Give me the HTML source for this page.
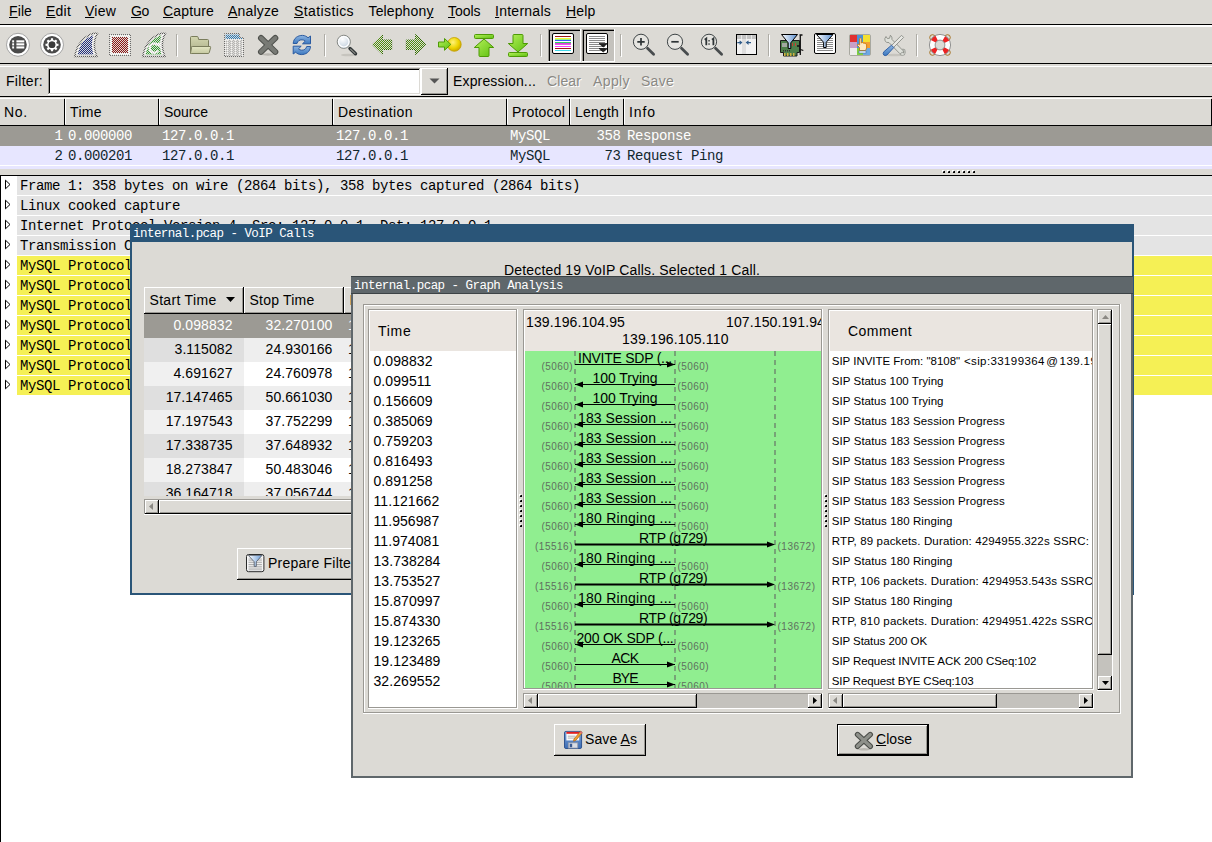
<!DOCTYPE html>
<html><head><meta charset="utf-8"><title>Wireshark</title>
<style>
html,body{margin:0;padding:0}
body{width:1212px;height:842px;overflow:hidden;background:#fff;position:relative;font-family:"Liberation Sans",sans-serif}
#root{position:absolute;left:0;top:0;width:1212px;height:842px;overflow:hidden;background:#fff}
#root div,#root span,#root svg{position:absolute}
.t{height:0;line-height:0;white-space:pre;font-family:"Liberation Sans",sans-serif}
.m{font-family:"Liberation Mono",monospace}
u{text-decoration:underline;text-underline-offset:1px}
.clip{overflow:hidden}
.dis{text-shadow:1px 1px 0 #fff}
</style></head>
<body><div id="root">
<div style="left:0px;top:0px;width:1212px;height:842px;background:#fff;"></div>
<div style="left:0px;top:0px;width:1212px;height:176px;background:#dcdad5;"></div>
<div style="left:0px;top:24px;width:1212px;height:1px;background:#000000;"></div>
<div style="left:0px;top:25px;width:1212px;height:2px;background:#ffffff;"></div>
<span class="t" style="left:9.00px;top:11px;font-size:14px;color:#000;letter-spacing:0.110px;"><u>F</u>ile</span>
<span class="t" style="left:46.00px;top:11px;font-size:14px;color:#000;letter-spacing:0.219px;"><u>E</u>dit</span>
<span class="t" style="left:85.00px;top:11px;font-size:14px;color:#000;letter-spacing:0.227px;"><u>V</u>iew</span>
<span class="t" style="left:131.00px;top:11px;font-size:14px;color:#000;letter-spacing:-0.338px;"><u>G</u>o</span>
<span class="t" style="left:163.00px;top:11px;font-size:14px;color:#000;letter-spacing:0.170px;"><u>C</u>apture</span>
<span class="t" style="left:228.00px;top:11px;font-size:14px;color:#000;letter-spacing:0.170px;"><u>A</u>nalyze</span>
<span class="t" style="left:294.00px;top:11px;font-size:14px;color:#000;letter-spacing:0.399px;"><u>S</u>tatistics</span>
<span class="t" style="left:368.50px;top:11px;font-size:14px;color:#000;letter-spacing:0.130px;">Telephon<u>y</u></span>
<span class="t" style="left:448.00px;top:11px;font-size:14px;color:#000;letter-spacing:-0.037px;"><u>T</u>ools</span>
<span class="t" style="left:495.00px;top:11px;font-size:14px;color:#000;letter-spacing:0.256px;"><u>I</u>nternals</span>
<span class="t" style="left:566.00px;top:11px;font-size:14px;color:#000;letter-spacing:0.176px;"><u>H</u>elp</span>
<div style="left:0px;top:63px;width:1212px;height:1px;background:#000000;"></div>
<div style="left:0px;top:66px;width:1212px;height:1px;background:#ffffff;"></div>
<svg style="left:0;top:26px" width="1212" height="37" viewBox="0 26 1212 37"><defs><pattern id="chk" width="2" height="2" patternUnits="userSpaceOnUse"><rect x="0" y="0" width="1" height="1" fill="#dcdad5"/><rect x="1" y="1" width="1" height="1" fill="#dcdad5"/></pattern><linearGradient id="gfold" x1="0" y1="0" x2="0" y2="1"><stop offset="0" stop-color="#d4d7b0"/><stop offset="1" stop-color="#a8ab86"/></linearGradient><linearGradient id="gflap" x1="0" y1="0" x2="0" y2="1"><stop offset="0" stop-color="#e4e7c4"/><stop offset="1" stop-color="#c6c9a2"/></linearGradient><linearGradient id="ggrn" x1="0" y1="0" x2="1" y2="1"><stop offset="0" stop-color="#b4f05a"/><stop offset="1" stop-color="#5fc010"/></linearGradient><linearGradient id="gblu" x1="0" y1="0" x2="0" y2="1"><stop offset="0" stop-color="#8db4e0"/><stop offset="1" stop-color="#3b78c0"/></linearGradient><radialGradient id="gball" cx="0.4" cy="0.35" r="0.7"><stop offset="0" stop-color="#fff27a"/><stop offset="0.6" stop-color="#edd400"/><stop offset="1" stop-color="#c4a000"/></radialGradient><radialGradient id="glens" cx="0.4" cy="0.3" r="0.8"><stop offset="0" stop-color="#ffffff"/><stop offset="1" stop-color="#b9c9d9"/></radialGradient><linearGradient id="gfun" x1="0" y1="0" x2="1" y2="0"><stop offset="0" stop-color="#ffffff"/><stop offset="1" stop-color="#5b8fd0"/></linearGradient></defs><rect x="176" y="34" width="1" height="22" fill="#aeaca6"/><rect x="177" y="35" width="1" height="22" fill="#fff"/><rect x="324" y="34" width="1" height="22" fill="#aeaca6"/><rect x="325" y="35" width="1" height="22" fill="#fff"/><rect x="540" y="34" width="1" height="22" fill="#aeaca6"/><rect x="541" y="35" width="1" height="22" fill="#fff"/><rect x="620" y="34" width="1" height="22" fill="#aeaca6"/><rect x="621" y="35" width="1" height="22" fill="#fff"/><rect x="768" y="34" width="1" height="22" fill="#aeaca6"/><rect x="769" y="35" width="1" height="22" fill="#fff"/><rect x="916" y="34" width="1" height="22" fill="#aeaca6"/><rect x="917" y="35" width="1" height="22" fill="#fff"/><circle cx="18" cy="44.8" r="11.5" fill="#fff" stroke="#9a9a9a" stroke-width="0.9"/><circle cx="18" cy="44.8" r="8.8" fill="#4a4a4a"/><rect x="16.4" y="40.3" width="7.9" height="2.1" fill="#fff"/><rect x="12.2" y="40.3" width="1.9" height="2.1" fill="#fff"/><rect x="16.4" y="43.3" width="7.9" height="2.1" fill="#fff"/><rect x="12.2" y="43.3" width="1.9" height="2.1" fill="#fff"/><rect x="16.4" y="46.4" width="7.9" height="2.1" fill="#fff"/><rect x="12.2" y="46.4" width="1.9" height="2.1" fill="#fff"/><circle cx="52" cy="44.8" r="11.5" fill="#fff" stroke="#9a9a9a" stroke-width="0.9"/><circle cx="52" cy="44.8" r="8.8" fill="#4a4a4a"/><path d="M56.86 43.63 L58.52 43.77 L58.52 45.83 L56.86 45.97 L56.26 47.41 L57.34 48.68 L55.88 50.14 L54.61 49.06 L53.17 49.66 L53.03 51.32 L50.97 51.32 L50.83 49.66 L49.39 49.06 L48.12 50.14 L46.66 48.68 L47.74 47.41 L47.14 45.97 L45.48 45.83 L45.48 43.77 L47.14 43.63 L47.74 42.19 L46.66 40.92 L48.12 39.46 L49.39 40.54 L50.83 39.94 L50.97 38.28 L53.03 38.28 L53.17 39.94 L54.61 40.54 L55.88 39.46 L57.34 40.92 L56.26 42.19Z M55.30 44.80 A3.3 3.3 0 1 0 48.70 44.80 A3.3 3.3 0 1 0 55.30 44.80Z" fill="#fff" fill-rule="evenodd"/><circle cx="52" cy="44.8" r="3.3" fill="#3a3a3a"/><g transform="translate(74 33)"><path d="M0.7 23.5 L23 23.5 C21.8 20.5 20.9 18 20.6 15 C20.2 11 20.5 5 23.5 0.4 C20 -0.2 17.5 0.8 15.8 1.6 C12 3.5 9.5 5.8 8.3 7.3 C5.5 10.5 4 13 3.3 14.5 C2 17.5 1.2 20.5 0.7 23.5Z" fill="#fff" stroke="#5a5a5a" stroke-width="1.5"/><path d="M3.7 21.6 L19.4 21.6 C18.6 18 18 15 17.95 13 C17.9 10 18.3 6 19.4 2.3 C15 3.6 11 6.5 9 9 C6.5 12 4.5 17 3.7 21.6Z" fill="#1c2c80"/></g><rect x="74" y="32" width="25" height="26" fill="url(#chk)" shape-rendering="crispEdges"/><rect x="109.5" y="34.5" width="21" height="21" fill="#fff" stroke="#6a6a6a" stroke-width="1"/><rect x="112" y="37" width="16" height="16" fill="#8e1414"/><rect x="108" y="34" width="24" height="24" fill="url(#chk)" shape-rendering="crispEdges"/><g transform="translate(142 33)"><path d="M0.7 23.5 L23 23.5 C21.8 20.5 20.9 18 20.6 15 C20.2 11 20.5 5 23.5 0.4 C20 -0.2 17.5 0.8 15.8 1.6 C12 3.5 9.5 5.8 8.3 7.3 C5.5 10.5 4 13 3.3 14.5 C2 17.5 1.2 20.5 0.7 23.5Z" fill="#fff" stroke="#5a5a5a" stroke-width="1.5"/><path d="M3.7 21.6 L19.4 21.6 C18.6 18 18 15 17.95 13 C17.9 10 18.3 6 19.4 2.3 C15 3.6 11 6.5 9 9 C6.5 12 4.5 17 3.7 21.6Z" fill="#2fa02f"/><path d="M15.8 12.2 A4.6 4.6 0 1 0 16.2 17.5" fill="none" stroke="#fff" stroke-width="2.4"/><path d="M13 11 L18.3 9.2 L17.6 14.6Z" fill="#fff"/></g><rect x="142" y="32" width="25" height="26" fill="url(#chk)" shape-rendering="crispEdges"/><path d="M190.5 53.5 V37.5 Q190.5 36.5 191.5 36.5 H197 Q198 36.5 198.2 37.5 L198.6 39.5 H207.5 Q208.5 39.5 208.5 40.5 V47 H190.5Z" fill="url(#gfold)" stroke="#7a7d5c" stroke-width="1"/><path d="M192.5 46.5 H210 Q210.8 46.5 210.6 47.4 L209.3 52.6 Q209 53.5 208 53.5 H191.3 Q190.4 53.5 190.6 52.6 L191.6 47.4 Q191.8 46.5 192.5 46.5Z" fill="url(#gflap)" stroke="#7a7d5c" stroke-width="1"/><path d="M224.5 33.5 H239.5 L243.5 37.5 V56.5 H224.5Z" fill="#f4f4f4" stroke="#6a6a6a" stroke-width="1"/><path d="M225.5 34.5 H239 L242.5 38 V39 H225.5Z" fill="#2a7ab8"/><path d="M239.5 33.5 V37.5 H243.5Z" fill="#ddd" stroke="#6a6a6a" stroke-width="0.8"/><rect x="226" y="41" width="16" height="1" fill="#b4b4b4"/><rect x="226" y="43" width="16" height="1" fill="#b4b4b4"/><rect x="226" y="45" width="16" height="1" fill="#b4b4b4"/><rect x="226" y="47" width="16" height="1" fill="#b4b4b4"/><rect x="226" y="49" width="16" height="1" fill="#b4b4b4"/><rect x="226" y="51" width="16" height="1" fill="#b4b4b4"/><rect x="226" y="53" width="16" height="1" fill="#b4b4b4"/><rect x="226" y="55" width="16" height="1" fill="#b4b4b4"/><rect x="229" y="40" width="1" height="16" fill="#b4b4b4"/><rect x="233" y="40" width="1" height="16" fill="#b4b4b4"/><rect x="237" y="40" width="1" height="16" fill="#b4b4b4"/><rect x="241" y="40" width="1" height="16" fill="#b4b4b4"/><rect x="224" y="33" width="21" height="24" fill="url(#chk)" shape-rendering="crispEdges"/><ellipse cx="268" cy="54.5" rx="6" ry="1.2" fill="#b8b6b0"/><path d="M261 38 L275.3 51.8 M275.3 38 L261 51.8" stroke="#4e504c" stroke-width="6" stroke-linecap="round" fill="none"/><path d="M261 38 L275.3 51.8 M275.3 38 L261 51.8" stroke="#787a75" stroke-width="4" stroke-linecap="round" fill="none"/><g stroke="#2a5aa0" stroke-width="1" fill="url(#gblu)" stroke-linejoin="round"><path d="M293.2 43.5 C293.5 38 298 35.3 302.5 35.4 C305 35.5 306.8 36.6 308 37.8 L310.5 36 V43.8 H302.5 L305.2 41.2 C304.4 40.3 303.4 39.8 302 39.8 C299.5 39.8 297.6 41 297 43.5Z"/><path d="M310.5 46.5 C310.2 52 305.7 54.7 301.2 54.6 C298.7 54.5 296.9 53.4 295.7 52.2 L293.2 54 V46.2 H301.2 L298.5 48.8 C299.3 49.7 300.3 50.2 301.7 50.2 C304.2 50.2 306.1 49 306.7 46.5Z"/></g><ellipse cx="348" cy="55" rx="7" ry="1.3" fill="#c6c4be"/><path d="M350 48.5 L355.5 53.8" stroke="#2e3436" stroke-width="3.4" stroke-linecap="round"/><path d="M350.6 49.2 L355 53.4" stroke="#888a85" stroke-width="1.2" stroke-linecap="round"/><circle cx="343.8" cy="41.8" r="6.6" fill="url(#glens)" stroke="#888a85" stroke-width="1"/><circle cx="343.8" cy="41.8" r="5.2" fill="none" stroke="#fff" stroke-width="1.2"/><path d="M372.3 44.6 L382.5 34.6 V40 H391.7 V49.5 H382.5 V54.6Z" fill="#4f9010" stroke="#2f6a00" stroke-width="1"/><rect x="371" y="34" width="22" height="22" fill="url(#chk)" shape-rendering="crispEdges"/><path d="M425.7 44.6 L415.5 34.6 V40 H406.3 V49.5 H415.5 V54.6Z" fill="#4f9010" stroke="#2f6a00" stroke-width="1"/><rect x="405" y="34" width="22" height="22" fill="url(#chk)" shape-rendering="crispEdges"/><circle cx="454.3" cy="44.4" r="6.9" fill="url(#gball)" stroke="#c4a000" stroke-width="0.8"/><path d="M438.5 42 H444.5 V38.5 L450.8 44.4 L444.5 50.3 V47 H438.5Z" fill="url(#ggrn)" stroke="#4e9a06" stroke-width="1" stroke-linejoin="round"/><g fill="url(#ggrn)" stroke="#4e9a06" stroke-width="1" stroke-linejoin="round"><rect x="474.5" y="34.5" width="19" height="4" rx="1"/><path d="M484 39 L493.7 47.5 H489 V55.5 Q489 56.5 488 56.5 H480 Q479 56.5 479 55.5 V47.5 H474.3Z"/><rect x="508.5" y="52.5" width="19" height="4" rx="1"/><path d="M518 52 L527.7 43.5 H523 V35.5 Q523 34.5 522 34.5 H514 Q513 34.5 513 35.5 V43.5 H508.3Z"/></g><rect x="548" y="29" width="33" height="33" fill="#c4c2bd"/><rect x="548" y="29" width="33" height="1" fill="#9a9893"/><rect x="548" y="29" width="1" height="33" fill="#9a9893"/><rect x="549" y="30" width="32" height="1" fill="#000"/><rect x="549" y="30" width="1" height="31" fill="#000"/><rect x="548" y="61" width="33" height="1" fill="#fff"/><rect x="580" y="29" width="1" height="33" fill="#fff"/><rect x="582" y="29" width="33" height="33" fill="#c4c2bd"/><rect x="582" y="29" width="33" height="1" fill="#9a9893"/><rect x="582" y="29" width="1" height="33" fill="#9a9893"/><rect x="583" y="30" width="32" height="1" fill="#000"/><rect x="583" y="30" width="1" height="31" fill="#000"/><rect x="582" y="61" width="33" height="1" fill="#fff"/><rect x="614" y="29" width="1" height="33" fill="#fff"/><rect x="552.5" y="33.5" width="21" height="20" rx="1.5" fill="#fff" stroke="#000" stroke-width="1"/><rect x="555" y="36" width="16" height="1" fill="#a01818"/><rect x="555" y="38" width="16" height="1" fill="#f4f430"/><rect x="555" y="39" width="16" height="1" fill="#90f090"/><rect x="555" y="40" width="16" height="1" fill="#3c5cf0"/><rect x="555" y="42" width="16" height="1" fill="#30d060"/><rect x="555" y="43" width="16" height="1" fill="#e040e0"/><rect x="555" y="44" width="16" height="1" fill="#e060e0"/><rect x="555" y="46" width="16" height="1" fill="#ff40ff"/><rect x="555" y="48" width="16" height="1" fill="#a01818"/><rect x="555" y="50" width="16" height="1" fill="#40d8e8"/><rect x="586.5" y="33.5" width="21" height="20" rx="1.5" fill="#fff" stroke="#000" stroke-width="1"/><rect x="589" y="36" width="16" height="1" fill="#8a8a8a"/><rect x="589" y="38" width="16" height="1" fill="#8a8a8a"/><rect x="589" y="40" width="16" height="1" fill="#8a8a8a"/><rect x="589" y="42" width="16" height="1" fill="#8a8a8a"/><rect x="589" y="44" width="16" height="1" fill="#8a8a8a"/><rect x="589" y="46" width="16" height="1" fill="#8a8a8a"/><rect x="589" y="48" width="16" height="1" fill="#8a8a8a"/><rect x="589" y="50" width="16" height="1" fill="#8a8a8a"/><path d="M599 43.5 H607.5 L603.2 47Z M599 48.5 H607.5 L603.2 52Z" fill="#222" stroke="#000" stroke-width="0.6"/><path d="M647.5 48.3 L653.6 54.2" stroke="#484c4e" stroke-width="2.8" stroke-linecap="round"/><circle cx="641" cy="41.8" r="7.6" fill="#e6e5e1" stroke="#3e4446" stroke-width="1"/><path d="M637.3 41.8 H644.7 M641 38.1 V45.5" stroke="#2e3436" stroke-width="1.7"/><path d="M681.5 48.3 L687.6 54.2" stroke="#484c4e" stroke-width="2.8" stroke-linecap="round"/><circle cx="675" cy="41.8" r="7.6" fill="#e6e5e1" stroke="#3e4446" stroke-width="1"/><path d="M671.3 41.8 H678.7" stroke="#2e3436" stroke-width="1.7"/><path d="M715.5 48.3 L721.6 54.2" stroke="#484c4e" stroke-width="2.8" stroke-linecap="round"/><circle cx="709" cy="41.8" r="7.6" fill="#e6e5e1" stroke="#3e4446" stroke-width="1"/><path d="M704.7 39.8 L706.3 38.6 V45.3 M712 39.8 L713.4 38.6 V45.3" stroke="#2e3436" stroke-width="1.8" fill="none"/><rect x="708.4" y="40" width="1.3" height="1.5" fill="#2e3436"/><rect x="708.4" y="43.3" width="1.3" height="1.5" fill="#2e3436"/><rect x="736.5" y="34.5" width="20" height="20" fill="#f2f2f2" stroke="#000" stroke-width="1"/><rect x="737" y="35" width="19" height="4" fill="#c4c4c4"/><rect x="742" y="39" width="4" height="15" fill="#dedede"/><rect x="741" y="35" width="1" height="4" fill="#e8e8e8"/><rect x="746" y="35" width="1" height="4" fill="#e8e8e8"/><rect x="751" y="35" width="1" height="4" fill="#e8e8e8"/><path d="M737.3 42.6 H741.3 M739.6 40.8 L741.6 42.6 L739.6 44.4 M751 42.6 H746.8 M748.6 40.8 L746.5 42.6 L748.6 44.4" stroke="#2f5a88" stroke-width="1.1" fill="none"/><path d="M780.5 40.5 H799.5 V52.5 H797 V56 H783.5 V52.5 H780.5Z" fill="#4d7f4a" stroke="#1c1c1c" stroke-width="1"/><rect x="782" y="43" width="5" height="4" fill="#a0a8a0"/><rect x="792" y="43" width="1" height="3" fill="#c84030"/><rect x="795" y="43" width="1" height="3" fill="#c84030"/><rect x="784" y="53" width="1.5" height="3" fill="#d0b040"/><rect x="787" y="53" width="1.5" height="3" fill="#d0b040"/><rect x="790" y="53" width="1.5" height="3" fill="#d0b040"/><rect x="793" y="53" width="1.5" height="3" fill="#d0b040"/><rect x="783" y="50" width="1" height="1.5" fill="#303030"/><rect x="785" y="50" width="1" height="1.5" fill="#303030"/><rect x="787" y="50" width="1" height="1.5" fill="#303030"/><rect x="789" y="50" width="1" height="1.5" fill="#303030"/><path d="M800.3 34.5 V55 M799.5 35 H802.5 M800.5 49.5 L803.3 50.5 M797 46 H800" stroke="#111" stroke-width="1.3" fill="none"/><path d="M781.5 34.5 H797.5 L790.8 42.8 V48.5 H788.2 V42.8Z" fill="url(#gfun)" stroke="#000" stroke-width="1" stroke-linejoin="round"/><rect x="814.5" y="33.5" width="21" height="20" rx="1.5" fill="#fff" stroke="#000" stroke-width="1"/><rect x="817" y="38" width="16" height="1" fill="#8a8a8a"/><rect x="817" y="40" width="16" height="1" fill="#8a8a8a"/><rect x="817" y="42" width="16" height="1" fill="#8a8a8a"/><rect x="817" y="44" width="16" height="1" fill="#8a8a8a"/><rect x="817" y="46" width="16" height="1" fill="#8a8a8a"/><rect x="817" y="48" width="16" height="1" fill="#8a8a8a"/><rect x="817" y="50" width="16" height="1" fill="#8a8a8a"/><path d="M816.5 34.5 H833 L826.2 42.3 V47.5 H823.6 V42.3Z" fill="url(#gfun)" stroke="#000" stroke-width="1" stroke-linejoin="round"/><rect x="849.5" y="34.5" width="21" height="21" rx="1.5" fill="#eeeeec" stroke="#a8a8a0" stroke-width="1"/><rect x="850" y="35" width="7" height="7" fill="#e03030"/><rect x="857" y="35" width="6" height="7" fill="#4a90d8"/><rect x="863" y="35" width="7" height="7" fill="#f4e030"/><rect x="850" y="42" width="7" height="6" fill="#c8a0c8"/><rect x="863" y="42" width="7" height="6" fill="#f4a030"/><rect x="850" y="48" width="7" height="7" fill="#eeeeec"/><rect x="857" y="48" width="6" height="7" fill="#80d040"/><rect x="863" y="48" width="7" height="7" fill="#70a8e0"/><rect x="857" y="42" width="6" height="6" fill="#4a90d8"/><path d="M859.5 50.5 V47.5 L857.6 45.6 Q857 44.4 858.3 44.3 L859.6 45 V38.6 Q860.4 37.4 861.3 38.6 V43 L862 42.4 Q862.8 42.2 863.2 43.2 L864 42.9 Q864.8 42.9 865 43.8 L865.8 43.6 Q866.7 43.8 866.6 44.8 V48 L865.6 50.5Z" fill="#fde8c0" stroke="#c87a10" stroke-width="0.9" stroke-linejoin="round"/><rect x="859" y="51" width="7" height="2" fill="#fff" stroke="#3a70b0" stroke-width="0.6"/><ellipse cx="894" cy="55" rx="9" ry="1.3" fill="#c6c4be"/><path d="M886 36.5 Q884.2 38.5 885 40.8 Q886.3 43 889 42.6 L899.8 53.6 Q901.5 55 903 53.5 Q904.3 52 902.8 50.4 L892 39.5 Q892.5 37 890.4 35.2 L889.6 38.2 L887.4 38.6Z" fill="#dfe1db" stroke="#8a8c86" stroke-width="0.9" stroke-linejoin="round"/><path d="M902.5 49 Q904.6 50.6 904 53 L901.6 52.4 L900.2 54.6 Q902 56 904.4 55 Q906 52.5 904.8 49.6Z" fill="#dfe1db" stroke="#8a8c86" stroke-width="0.7"/><path d="M901.5 35.3 L903.6 37.4 L893.5 47.5 L891.5 45.5Z" fill="#e8e8e4" stroke="#8a8c86" stroke-width="0.9" stroke-linejoin="round"/><path d="M891.5 45.2 L893.8 47.5 L887 55 Q885 56.3 883.7 55 Q882.5 53.6 883.8 51.8Z" fill="url(#gblu)" stroke="#2a5aa0" stroke-width="0.9" stroke-linejoin="round"/><circle cx="932.5" cy="37.5" r="2.8" fill="none" stroke="#a06a14" stroke-width="0.9"/><circle cx="947.5" cy="37.5" r="2.8" fill="none" stroke="#a06a14" stroke-width="0.9"/><circle cx="932.5" cy="52.5" r="2.8" fill="none" stroke="#a06a14" stroke-width="0.9"/><circle cx="947.5" cy="52.5" r="2.8" fill="none" stroke="#a06a14" stroke-width="0.9"/><circle cx="940" cy="45" r="7.7" fill="none" stroke="#fdfdfd" stroke-width="5.6"/><circle cx="940" cy="45" r="7.7" fill="none" stroke="#ee2222" stroke-width="5.6" stroke-dasharray="4.6 7.495" stroke-dashoffset="-3.75"/><circle cx="940" cy="45" r="10.6" fill="none" stroke="#888" stroke-width="0.9"/><circle cx="940" cy="45" r="4.9" fill="none" stroke="#888" stroke-width="0.9"/></svg>
<div style="left:0px;top:96px;width:1212px;height:1px;background:#000000;"></div>
<span class="t" style="left:6.00px;top:81px;font-size:14px;color:#000;letter-spacing:0.286px;">Filter:</span>
<div style="left:48px;top:68px;width:373px;height:27px;background:#fff;"></div>
<div style="left:48px;top:68px;width:373px;height:1px;background:#9a9893;"></div>
<div style="left:48px;top:68px;width:1px;height:27px;background:#9a9893;"></div>
<div style="left:49px;top:69px;width:371px;height:1px;background:#000000;"></div>
<div style="left:49px;top:69px;width:1px;height:25px;background:#000000;"></div>
<div style="left:48px;top:94px;width:373px;height:1px;background:#ffffff;"></div>
<div style="left:420px;top:68px;width:1px;height:27px;background:#ffffff;"></div>
<div style="left:49px;top:93px;width:371px;height:1px;background:#dcdad5;"></div>
<div style="left:419px;top:69px;width:1px;height:25px;background:#dcdad5;"></div>
<div style="left:421px;top:68px;width:27px;height:27px;background:#dcdad5;"></div>
<div style="left:421px;top:68px;width:26px;height:1px;background:#ffffff;"></div>
<div style="left:421px;top:68px;width:1px;height:26px;background:#ffffff;"></div>
<div style="left:421px;top:94px;width:27px;height:1px;background:#000000;"></div>
<div style="left:447px;top:68px;width:1px;height:27px;background:#000000;"></div>
<div style="left:422px;top:93px;width:25px;height:1px;background:#9a9893;"></div>
<div style="left:446px;top:69px;width:1px;height:25px;background:#9a9893;"></div>
<svg style="left:429px;top:78px" width="11" height="6" viewBox="0 0 11 6"><path d="M0.5 0.5h10L5.5 5.5z" fill="#555"/></svg>
<span class="t" style="left:453.00px;top:81px;font-size:14px;color:#000;letter-spacing:0.160px;">Expression...</span>
<span class="t dis" style="left:547.00px;top:81px;font-size:14px;color:#8a8883;letter-spacing:0.109px;">Clear</span>
<span class="t dis" style="left:593.00px;top:81px;font-size:14px;color:#8a8883;letter-spacing:0.396px;">Apply</span>
<span class="t dis" style="left:641.00px;top:81px;font-size:14px;color:#8a8883;letter-spacing:0.272px;">Save</span>
<div style="left:0px;top:98px;width:65px;height:27px;background:#dcdad5;"></div>
<div style="left:0px;top:98px;width:64px;height:1px;background:#ffffff;"></div>
<div style="left:64px;top:99px;width:1px;height:26px;background:#000000;"></div>
<span class="t" style="left:4.00px;top:112px;font-size:14px;color:#000;letter-spacing:0.738px;">No.</span>
<div style="left:65px;top:98px;width:94px;height:27px;background:#dcdad5;"></div>
<div style="left:65px;top:98px;width:93px;height:1px;background:#ffffff;"></div>
<div style="left:65px;top:98px;width:1px;height:26px;background:#ffffff;"></div>
<div style="left:158px;top:99px;width:1px;height:26px;background:#000000;"></div>
<span class="t" style="left:70.00px;top:112px;font-size:14px;color:#000;letter-spacing:0.352px;">Time</span>
<div style="left:159px;top:98px;width:174px;height:27px;background:#dcdad5;"></div>
<div style="left:159px;top:98px;width:173px;height:1px;background:#ffffff;"></div>
<div style="left:159px;top:98px;width:1px;height:26px;background:#ffffff;"></div>
<div style="left:332px;top:99px;width:1px;height:26px;background:#000000;"></div>
<span class="t" style="left:164.00px;top:112px;font-size:14px;color:#000;letter-spacing:-0.060px;">Source</span>
<div style="left:333px;top:98px;width:174px;height:27px;background:#dcdad5;"></div>
<div style="left:333px;top:98px;width:173px;height:1px;background:#ffffff;"></div>
<div style="left:333px;top:98px;width:1px;height:26px;background:#ffffff;"></div>
<div style="left:506px;top:99px;width:1px;height:26px;background:#000000;"></div>
<span class="t" style="left:338.00px;top:112px;font-size:14px;color:#000;letter-spacing:0.451px;">Destination</span>
<div style="left:507px;top:98px;width:63px;height:27px;background:#dcdad5;"></div>
<div style="left:507px;top:98px;width:62px;height:1px;background:#ffffff;"></div>
<div style="left:507px;top:98px;width:1px;height:26px;background:#ffffff;"></div>
<div style="left:569px;top:99px;width:1px;height:26px;background:#000000;"></div>
<span class="t" style="left:512.00px;top:112px;font-size:14px;color:#000;letter-spacing:0.205px;">Protocol</span>
<div style="left:570px;top:98px;width:54px;height:27px;background:#dcdad5;"></div>
<div style="left:570px;top:98px;width:53px;height:1px;background:#ffffff;"></div>
<div style="left:570px;top:98px;width:1px;height:26px;background:#ffffff;"></div>
<div style="left:623px;top:99px;width:1px;height:26px;background:#000000;"></div>
<span class="t" style="left:575.00px;top:112px;font-size:14px;color:#000;letter-spacing:0.196px;">Length</span>
<div style="left:624px;top:98px;width:588px;height:27px;background:#dcdad5;"></div>
<div style="left:624px;top:98px;width:587px;height:1px;background:#ffffff;"></div>
<div style="left:624px;top:98px;width:1px;height:26px;background:#ffffff;"></div>
<div style="left:1211px;top:99px;width:1px;height:26px;background:#000000;"></div>
<span class="t" style="left:629.00px;top:112px;font-size:14px;color:#000;letter-spacing:0.912px;">Info</span>
<div style="left:0px;top:125px;width:1212px;height:1px;background:#000000;"></div>
<div style="left:0px;top:126px;width:1212px;height:20px;background:#9c9a94;"></div>
<div style="left:0px;top:146px;width:1212px;height:19px;background:#e7e6ff;"></div>
<div style="left:0px;top:165px;width:1212px;height:1px;background:#fff;"></div>
<div style="left:0px;top:166px;width:1212px;height:3px;background:#e7e6ff;"></div>
<span class="t m" style="left:54.40px;top:136px;font-size:14px;color:#fff;letter-spacing:-0.401px;">1</span>
<span class="t m" style="left:68.00px;top:136px;font-size:14px;color:#fff;letter-spacing:-0.401px;">0.000000</span>
<span class="t m" style="left:162.00px;top:136px;font-size:14px;color:#fff;letter-spacing:-0.401px;">127.0.0.1</span>
<span class="t m" style="left:336.00px;top:136px;font-size:14px;color:#fff;letter-spacing:-0.401px;">127.0.0.1</span>
<span class="t m" style="left:510.00px;top:136px;font-size:14px;color:#fff;letter-spacing:-0.401px;">MySQL</span>
<span class="t m" style="left:596.60px;top:136px;font-size:14px;color:#fff;letter-spacing:-0.401px;">358</span>
<span class="t m" style="left:627.00px;top:136px;font-size:14px;color:#fff;letter-spacing:-0.401px;">Response</span>
<span class="t m" style="left:54.40px;top:156px;font-size:14px;color:#12272e;letter-spacing:-0.401px;">2</span>
<span class="t m" style="left:68.00px;top:156px;font-size:14px;color:#12272e;letter-spacing:-0.401px;">0.000201</span>
<span class="t m" style="left:162.00px;top:156px;font-size:14px;color:#12272e;letter-spacing:-0.401px;">127.0.0.1</span>
<span class="t m" style="left:336.00px;top:156px;font-size:14px;color:#12272e;letter-spacing:-0.401px;">127.0.0.1</span>
<span class="t m" style="left:510.00px;top:156px;font-size:14px;color:#12272e;letter-spacing:-0.401px;">MySQL</span>
<span class="t m" style="left:604.60px;top:156px;font-size:14px;color:#12272e;letter-spacing:-0.401px;">73</span>
<span class="t m" style="left:627.00px;top:156px;font-size:14px;color:#12272e;letter-spacing:-0.401px;">Request Ping</span>
<div style="left:942px;top:170px;width:2px;height:1px;background:#fff;"></div>
<div style="left:942px;top:171px;width:1px;height:1px;background:#fff;"></div>
<div style="left:943px;top:171px;width:1px;height:1px;background:#555;"></div>
<div style="left:944px;top:171px;width:1px;height:1px;background:#000;"></div>
<div style="left:943px;top:172px;width:2px;height:1px;background:#000;"></div>
<div style="left:947px;top:170px;width:2px;height:1px;background:#fff;"></div>
<div style="left:947px;top:171px;width:1px;height:1px;background:#fff;"></div>
<div style="left:948px;top:171px;width:1px;height:1px;background:#555;"></div>
<div style="left:949px;top:171px;width:1px;height:1px;background:#000;"></div>
<div style="left:948px;top:172px;width:2px;height:1px;background:#000;"></div>
<div style="left:952px;top:170px;width:2px;height:1px;background:#fff;"></div>
<div style="left:952px;top:171px;width:1px;height:1px;background:#fff;"></div>
<div style="left:953px;top:171px;width:1px;height:1px;background:#555;"></div>
<div style="left:954px;top:171px;width:1px;height:1px;background:#000;"></div>
<div style="left:953px;top:172px;width:2px;height:1px;background:#000;"></div>
<div style="left:957px;top:170px;width:2px;height:1px;background:#fff;"></div>
<div style="left:957px;top:171px;width:1px;height:1px;background:#fff;"></div>
<div style="left:958px;top:171px;width:1px;height:1px;background:#555;"></div>
<div style="left:959px;top:171px;width:1px;height:1px;background:#000;"></div>
<div style="left:958px;top:172px;width:2px;height:1px;background:#000;"></div>
<div style="left:962px;top:170px;width:2px;height:1px;background:#fff;"></div>
<div style="left:962px;top:171px;width:1px;height:1px;background:#fff;"></div>
<div style="left:963px;top:171px;width:1px;height:1px;background:#555;"></div>
<div style="left:964px;top:171px;width:1px;height:1px;background:#000;"></div>
<div style="left:963px;top:172px;width:2px;height:1px;background:#000;"></div>
<div style="left:967px;top:170px;width:2px;height:1px;background:#fff;"></div>
<div style="left:967px;top:171px;width:1px;height:1px;background:#fff;"></div>
<div style="left:968px;top:171px;width:1px;height:1px;background:#555;"></div>
<div style="left:969px;top:171px;width:1px;height:1px;background:#000;"></div>
<div style="left:968px;top:172px;width:2px;height:1px;background:#000;"></div>
<div style="left:972px;top:170px;width:2px;height:1px;background:#fff;"></div>
<div style="left:972px;top:171px;width:1px;height:1px;background:#fff;"></div>
<div style="left:973px;top:171px;width:1px;height:1px;background:#555;"></div>
<div style="left:974px;top:171px;width:1px;height:1px;background:#000;"></div>
<div style="left:973px;top:172px;width:2px;height:1px;background:#000;"></div>
<div style="left:0px;top:175px;width:1212px;height:1px;background:#000000;"></div>
<div style="left:0px;top:176px;width:1px;height:666px;background:#000000;"></div>
<div style="left:17px;top:176px;width:1195px;height:19px;background:#e4e4e4;"></div>
<svg style="left:4px;top:179px" width="8" height="11" viewBox="0 0 8 11"><path d="M1.5 1.2L6 5.5L1.5 9.8z" fill="#fff" stroke="#000" stroke-width="1"/></svg>
<span class="t m" style="left:20.00px;top:186px;font-size:14px;color:#000;letter-spacing:-0.401px;">Frame 1: 358 bytes on wire (2864 bits), 358 bytes captured (2864 bits)</span>
<div style="left:17px;top:196px;width:1195px;height:19px;background:#e4e4e4;"></div>
<svg style="left:4px;top:199px" width="8" height="11" viewBox="0 0 8 11"><path d="M1.5 1.2L6 5.5L1.5 9.8z" fill="#fff" stroke="#000" stroke-width="1"/></svg>
<span class="t m" style="left:20.00px;top:206px;font-size:14px;color:#000;letter-spacing:-0.401px;">Linux cooked capture</span>
<div style="left:17px;top:216px;width:1195px;height:19px;background:#e4e4e4;"></div>
<svg style="left:4px;top:219px" width="8" height="11" viewBox="0 0 8 11"><path d="M1.5 1.2L6 5.5L1.5 9.8z" fill="#fff" stroke="#000" stroke-width="1"/></svg>
<span class="t m" style="left:20.00px;top:226px;font-size:14px;color:#000;letter-spacing:-0.401px;">Internet Protocol Version 4, Src: 127.0.0.1, Dst: 127.0.0.1</span>
<div style="left:17px;top:236px;width:1195px;height:19px;background:#e4e4e4;"></div>
<svg style="left:4px;top:239px" width="8" height="11" viewBox="0 0 8 11"><path d="M1.5 1.2L6 5.5L1.5 9.8z" fill="#fff" stroke="#000" stroke-width="1"/></svg>
<span class="t m" style="left:20.00px;top:246px;font-size:14px;color:#000;letter-spacing:-0.401px;">Transmission Control Protocol, Src Port: mysql (3306)</span>
<div style="left:17px;top:256px;width:120px;height:19px;background:#f5f055;"></div>
<div style="left:1134px;top:256px;width:78px;height:19px;background:#f5f055;"></div>
<svg style="left:4px;top:259px" width="8" height="11" viewBox="0 0 8 11"><path d="M1.5 1.2L6 5.5L1.5 9.8z" fill="#fff" stroke="#000" stroke-width="1"/></svg>
<span class="t m" style="left:20.00px;top:266px;font-size:14px;color:#000;letter-spacing:-0.401px;">MySQL Protocol</span>
<div style="left:17px;top:276px;width:120px;height:19px;background:#f5f055;"></div>
<div style="left:1134px;top:276px;width:78px;height:19px;background:#f5f055;"></div>
<svg style="left:4px;top:279px" width="8" height="11" viewBox="0 0 8 11"><path d="M1.5 1.2L6 5.5L1.5 9.8z" fill="#fff" stroke="#000" stroke-width="1"/></svg>
<span class="t m" style="left:20.00px;top:286px;font-size:14px;color:#000;letter-spacing:-0.401px;">MySQL Protocol</span>
<div style="left:17px;top:296px;width:120px;height:19px;background:#f5f055;"></div>
<div style="left:1134px;top:296px;width:78px;height:19px;background:#f5f055;"></div>
<svg style="left:4px;top:299px" width="8" height="11" viewBox="0 0 8 11"><path d="M1.5 1.2L6 5.5L1.5 9.8z" fill="#fff" stroke="#000" stroke-width="1"/></svg>
<span class="t m" style="left:20.00px;top:306px;font-size:14px;color:#000;letter-spacing:-0.401px;">MySQL Protocol</span>
<div style="left:17px;top:316px;width:120px;height:19px;background:#f5f055;"></div>
<div style="left:1134px;top:316px;width:78px;height:19px;background:#f5f055;"></div>
<svg style="left:4px;top:319px" width="8" height="11" viewBox="0 0 8 11"><path d="M1.5 1.2L6 5.5L1.5 9.8z" fill="#fff" stroke="#000" stroke-width="1"/></svg>
<span class="t m" style="left:20.00px;top:326px;font-size:14px;color:#000;letter-spacing:-0.401px;">MySQL Protocol</span>
<div style="left:17px;top:336px;width:120px;height:19px;background:#f5f055;"></div>
<div style="left:1134px;top:336px;width:78px;height:19px;background:#f5f055;"></div>
<svg style="left:4px;top:339px" width="8" height="11" viewBox="0 0 8 11"><path d="M1.5 1.2L6 5.5L1.5 9.8z" fill="#fff" stroke="#000" stroke-width="1"/></svg>
<span class="t m" style="left:20.00px;top:346px;font-size:14px;color:#000;letter-spacing:-0.401px;">MySQL Protocol</span>
<div style="left:17px;top:356px;width:120px;height:19px;background:#f5f055;"></div>
<div style="left:1134px;top:356px;width:78px;height:19px;background:#f5f055;"></div>
<svg style="left:4px;top:359px" width="8" height="11" viewBox="0 0 8 11"><path d="M1.5 1.2L6 5.5L1.5 9.8z" fill="#fff" stroke="#000" stroke-width="1"/></svg>
<span class="t m" style="left:20.00px;top:366px;font-size:14px;color:#000;letter-spacing:-0.401px;">MySQL Protocol</span>
<div style="left:17px;top:376px;width:120px;height:19px;background:#f5f055;"></div>
<div style="left:1134px;top:376px;width:78px;height:19px;background:#f5f055;"></div>
<svg style="left:4px;top:379px" width="8" height="11" viewBox="0 0 8 11"><path d="M1.5 1.2L6 5.5L1.5 9.8z" fill="#fff" stroke="#000" stroke-width="1"/></svg>
<span class="t m" style="left:20.00px;top:386px;font-size:14px;color:#000;letter-spacing:-0.401px;">MySQL Protocol</span>
<div style="left:130px;top:224px;width:1004px;height:371px;background:#2a5578;"></div>
<div style="left:132px;top:242px;width:1000px;height:351px;background:#dcdad5;"></div>
<span class="t m" style="left:133.00px;top:234px;font-size:12.5px;color:#fff;letter-spacing:-0.539px;">internal.pcap - VoIP Calls</span>
<span class="t" style="left:504.00px;top:270px;font-size:14px;color:#000;letter-spacing:0.161px;">Detected 19 VoIP Calls. Selected 1 Call.</span>
<div style="left:144px;top:287px;width:100px;height:27px;background:#dcdad5;"></div>
<div style="left:144px;top:287px;width:99px;height:1px;background:#ffffff;"></div>
<div style="left:144px;top:287px;width:1px;height:26px;background:#ffffff;"></div>
<div style="left:243px;top:287px;width:1px;height:27px;background:#000000;"></div>
<div style="left:144px;top:313px;width:100px;height:1px;background:#000000;"></div>
<div style="left:242px;top:288px;width:1px;height:25px;background:#9a9893;"></div>
<div style="left:145px;top:312px;width:98px;height:1px;background:#9a9893;"></div>
<div style="left:244px;top:287px;width:100px;height:27px;background:#dcdad5;"></div>
<div style="left:244px;top:287px;width:99px;height:1px;background:#ffffff;"></div>
<div style="left:244px;top:287px;width:1px;height:26px;background:#ffffff;"></div>
<div style="left:343px;top:287px;width:1px;height:27px;background:#000000;"></div>
<div style="left:244px;top:313px;width:100px;height:1px;background:#000000;"></div>
<div style="left:342px;top:288px;width:1px;height:25px;background:#9a9893;"></div>
<div style="left:245px;top:312px;width:98px;height:1px;background:#9a9893;"></div>
<div style="left:344px;top:287px;width:100px;height:27px;background:#dcdad5;"></div>
<div style="left:344px;top:287px;width:99px;height:1px;background:#ffffff;"></div>
<div style="left:344px;top:287px;width:1px;height:26px;background:#ffffff;"></div>
<div style="left:443px;top:287px;width:1px;height:27px;background:#000000;"></div>
<div style="left:344px;top:313px;width:100px;height:1px;background:#000000;"></div>
<div style="left:442px;top:288px;width:1px;height:25px;background:#9a9893;"></div>
<div style="left:345px;top:312px;width:98px;height:1px;background:#9a9893;"></div>
<span class="t" style="left:149.50px;top:300px;font-size:14px;color:#000;letter-spacing:0.320px;">Start Time</span>
<span class="t" style="left:249.50px;top:300px;font-size:14px;color:#000;letter-spacing:0.219px;">Stop Time</span>
<span class="t" style="left:349.50px;top:300px;font-size:14px;color:#000;">Initial Speaker</span>
<svg style="left:226px;top:297px" width="9" height="5" viewBox="0 0 9 5"><path d="M0 0h9L4.5 5z" fill="#000"/></svg>
<div class="clip" style="left:144px;top:314px;width:220px;height:182px">
<div style="left:0px;top:0px;width:220px;height:24px;background:#9c9a94;"></div>
<span class="t" style="left:29.50px;top:11px;font-size:14px;color:#fff;letter-spacing:0.076px;">0.098832</span>
<span class="t" style="left:121.50px;top:11px;font-size:14px;color:#fff;letter-spacing:0.091px;">32.270100</span>
<span class="t" style="left:204.00px;top:11px;font-size:14px;color:#fff;">1</span>
<div style="left:0px;top:24px;width:100px;height:24px;background:#dfdfdf;"></div>
<div style="left:100px;top:24px;width:120px;height:24px;background:#eeeeee;"></div>
<span class="t" style="left:30.55px;top:35px;font-size:14px;color:#000;letter-spacing:0.074px;">3.115082</span>
<span class="t" style="left:121.50px;top:35px;font-size:14px;color:#000;letter-spacing:0.091px;">24.930166</span>
<span class="t" style="left:204.00px;top:35px;font-size:14px;color:#000;">1</span>
<div style="left:0px;top:48px;width:100px;height:24px;background:#f0f0f0;"></div>
<div style="left:100px;top:48px;width:120px;height:24px;background:#ffffff;"></div>
<span class="t" style="left:29.50px;top:59px;font-size:14px;color:#000;letter-spacing:0.076px;">4.691627</span>
<span class="t" style="left:121.50px;top:59px;font-size:14px;color:#000;letter-spacing:0.091px;">24.760978</span>
<span class="t" style="left:204.00px;top:59px;font-size:14px;color:#000;">1</span>
<div style="left:0px;top:72px;width:100px;height:24px;background:#dfdfdf;"></div>
<div style="left:100px;top:72px;width:120px;height:24px;background:#eeeeee;"></div>
<span class="t" style="left:21.63px;top:83px;font-size:14px;color:#000;letter-spacing:0.076px;">17.147465</span>
<span class="t" style="left:121.50px;top:83px;font-size:14px;color:#000;letter-spacing:0.091px;">50.661030</span>
<span class="t" style="left:204.00px;top:83px;font-size:14px;color:#000;">1</span>
<div style="left:0px;top:96px;width:100px;height:24px;background:#f0f0f0;"></div>
<div style="left:100px;top:96px;width:120px;height:24px;background:#ffffff;"></div>
<span class="t" style="left:21.63px;top:107px;font-size:14px;color:#000;letter-spacing:0.076px;">17.197543</span>
<span class="t" style="left:121.50px;top:107px;font-size:14px;color:#000;letter-spacing:0.091px;">37.752299</span>
<span class="t" style="left:204.00px;top:107px;font-size:14px;color:#000;">1</span>
<div style="left:0px;top:120px;width:100px;height:24px;background:#dfdfdf;"></div>
<div style="left:100px;top:120px;width:120px;height:24px;background:#eeeeee;"></div>
<span class="t" style="left:21.63px;top:131px;font-size:14px;color:#000;letter-spacing:0.076px;">17.338735</span>
<span class="t" style="left:121.50px;top:131px;font-size:14px;color:#000;letter-spacing:0.091px;">37.648932</span>
<span class="t" style="left:204.00px;top:131px;font-size:14px;color:#000;">1</span>
<div style="left:0px;top:144px;width:100px;height:24px;background:#f0f0f0;"></div>
<div style="left:100px;top:144px;width:120px;height:24px;background:#ffffff;"></div>
<span class="t" style="left:21.63px;top:155px;font-size:14px;color:#000;letter-spacing:0.076px;">18.273847</span>
<span class="t" style="left:121.50px;top:155px;font-size:14px;color:#000;letter-spacing:0.091px;">50.483046</span>
<span class="t" style="left:204.00px;top:155px;font-size:14px;color:#000;">1</span>
<div style="left:0px;top:168px;width:100px;height:24px;background:#dfdfdf;"></div>
<div style="left:100px;top:168px;width:120px;height:24px;background:#eeeeee;"></div>
<span class="t" style="left:21.63px;top:179px;font-size:14px;color:#000;letter-spacing:0.076px;">36.164718</span>
<span class="t" style="left:121.50px;top:179px;font-size:14px;color:#000;letter-spacing:0.091px;">37.056744</span>
<span class="t" style="left:204.00px;top:179px;font-size:14px;color:#000;">1</span>
</div>
<div style="left:144px;top:499px;width:220px;height:16px;background:#c4c2bd;"></div>
<div style="left:144px;top:499px;width:220px;height:1px;background:#9a9893;"></div>
<div style="left:144px;top:499px;width:1px;height:16px;background:#9a9893;"></div>
<div style="left:144px;top:514px;width:220px;height:1px;background:#ffffff;"></div>
<div style="left:145px;top:500px;width:14px;height:14px;background:#dcdad5;"></div>
<div style="left:145px;top:500px;width:13px;height:1px;background:#ffffff;"></div>
<div style="left:145px;top:500px;width:1px;height:13px;background:#ffffff;"></div>
<div style="left:145px;top:513px;width:14px;height:1px;background:#000000;"></div>
<div style="left:158px;top:500px;width:1px;height:14px;background:#000000;"></div>
<div style="left:146px;top:512px;width:12px;height:1px;background:#9a9893;"></div>
<div style="left:157px;top:501px;width:1px;height:12px;background:#9a9893;"></div>
<svg style="left:149px;top:503px" width="4" height="7" viewBox="0 0 4 7"><path d="M4 0v7L0 3.5z" fill="#8a8883"/></svg>
<div style="left:159px;top:500px;width:210px;height:14px;background:#dcdad5;"></div>
<div style="left:159px;top:500px;width:209px;height:1px;background:#ffffff;"></div>
<div style="left:159px;top:500px;width:1px;height:13px;background:#ffffff;"></div>
<div style="left:159px;top:513px;width:210px;height:1px;background:#000000;"></div>
<div style="left:368px;top:500px;width:1px;height:14px;background:#000000;"></div>
<div style="left:160px;top:512px;width:208px;height:1px;background:#9a9893;"></div>
<div style="left:367px;top:501px;width:1px;height:12px;background:#9a9893;"></div>
<div style="left:237px;top:548px;width:130px;height:32px;background:#dcdad5;"></div>
<div style="left:237px;top:548px;width:129px;height:1px;background:#ffffff;"></div>
<div style="left:237px;top:548px;width:1px;height:31px;background:#ffffff;"></div>
<div style="left:237px;top:579px;width:130px;height:1px;background:#000000;"></div>
<div style="left:366px;top:548px;width:1px;height:32px;background:#000000;"></div>
<div style="left:238px;top:578px;width:128px;height:1px;background:#9a9893;"></div>
<div style="left:365px;top:549px;width:1px;height:30px;background:#9a9893;"></div>
<span class="t" style="left:268.00px;top:563px;font-size:14px;color:#000;letter-spacing:0.228px;">Prepare Filter</span>
<svg style="left:246px;top:554px" width="20" height="20" viewBox="0 0 20 20"><defs><linearGradient id="gfun2" x1="0" y1="0" x2="1" y2="0"><stop offset="0" stop-color="#fff"/><stop offset="1" stop-color="#6b9cd8"/></linearGradient></defs><rect x="0.5" y="0.5" width="17.4" height="17.2" rx="2" fill="#f6f6f6" stroke="#2a2a2a"/><rect x="2.5" y="4.6" width="13.4" height="0.9" fill="#a8a8a8"/><rect x="2.5" y="6.4" width="13.4" height="0.9" fill="#a8a8a8"/><rect x="2.5" y="8.2" width="13.4" height="0.9" fill="#a8a8a8"/><rect x="2.5" y="10" width="13.4" height="0.9" fill="#a8a8a8"/><rect x="2.5" y="11.8" width="13.4" height="0.9" fill="#a8a8a8"/><rect x="2.5" y="13.6" width="13.4" height="0.9" fill="#a8a8a8"/><rect x="2.5" y="15.4" width="13.4" height="0.9" fill="#a8a8a8"/><path d="M2.4 1.4 H16 L10.3 7.8 V12.4 H8.2 V7.8Z" fill="url(#gfun2)" stroke="#3c4450" stroke-width="0.7" stroke-linejoin="round"/></svg>
<div style="left:351px;top:276px;width:782px;height:502px;background:#5f676b;"></div>
<div style="left:351px;top:276px;width:782px;height:1px;background:#3c4346;"></div>
<div style="left:351px;top:293px;width:782px;height:1px;background:#3c4346;"></div>
<div style="left:353px;top:294px;width:778px;height:482px;background:#dcdad5;"></div>
<span class="t m" style="left:354.00px;top:286px;font-size:12.5px;color:#fff;letter-spacing:-0.534px;">internal.pcap - Graph Analysis</span>
<div style="left:363px;top:304px;width:758px;height:1px;background:#9a9893;"></div>
<div style="left:363px;top:304px;width:1px;height:410px;background:#9a9893;"></div>
<div style="left:364px;top:305px;width:756px;height:1px;background:#ffffff;"></div>
<div style="left:364px;top:305px;width:1px;height:408px;background:#ffffff;"></div>
<div style="left:363px;top:713px;width:758px;height:1px;background:#ffffff;"></div>
<div style="left:1120px;top:304px;width:1px;height:410px;background:#ffffff;"></div>
<div style="left:364px;top:712px;width:756px;height:1px;background:#9a9893;"></div>
<div style="left:1119px;top:305px;width:1px;height:408px;background:#9a9893;"></div>
<div style="left:368px;top:309px;width:150px;height:400px;background:#fff;"></div>
<div style="left:368px;top:309px;width:150px;height:1px;background:#9a9893;"></div>
<div style="left:368px;top:309px;width:1px;height:400px;background:#9a9893;"></div>
<div style="left:369px;top:310px;width:148px;height:1px;background:#ffffff;"></div>
<div style="left:369px;top:310px;width:1px;height:398px;background:#ffffff;"></div>
<div style="left:368px;top:708px;width:150px;height:1px;background:#ffffff;"></div>
<div style="left:517px;top:309px;width:1px;height:400px;background:#ffffff;"></div>
<div style="left:369px;top:707px;width:148px;height:1px;background:#9a9893;"></div>
<div style="left:516px;top:310px;width:1px;height:398px;background:#9a9893;"></div>
<div style="left:370px;top:311px;width:146px;height:40px;background:#eae5e0;"></div>
<span class="t" style="left:378.00px;top:331px;font-size:14px;color:#000;letter-spacing:0.727px;">Time</span>
<span class="t" style="left:373.50px;top:361px;font-size:14px;color:#000;letter-spacing:0.076px;">0.098832</span>
<span class="t" style="left:373.50px;top:381px;font-size:14px;color:#000;letter-spacing:0.074px;">0.099511</span>
<span class="t" style="left:373.50px;top:401px;font-size:14px;color:#000;letter-spacing:0.076px;">0.156609</span>
<span class="t" style="left:373.50px;top:421px;font-size:14px;color:#000;letter-spacing:0.076px;">0.385069</span>
<span class="t" style="left:373.50px;top:441px;font-size:14px;color:#000;letter-spacing:0.076px;">0.759203</span>
<span class="t" style="left:373.50px;top:461px;font-size:14px;color:#000;letter-spacing:0.076px;">0.816493</span>
<span class="t" style="left:373.50px;top:481px;font-size:14px;color:#000;letter-spacing:0.076px;">0.891258</span>
<span class="t" style="left:373.50px;top:501px;font-size:14px;color:#000;letter-spacing:0.075px;">11.121662</span>
<span class="t" style="left:373.50px;top:521px;font-size:14px;color:#000;letter-spacing:0.075px;">11.956987</span>
<span class="t" style="left:373.50px;top:541px;font-size:14px;color:#000;letter-spacing:0.075px;">11.974081</span>
<span class="t" style="left:373.50px;top:561px;font-size:14px;color:#000;letter-spacing:0.076px;">13.738284</span>
<span class="t" style="left:373.50px;top:581px;font-size:14px;color:#000;letter-spacing:0.076px;">13.753527</span>
<span class="t" style="left:373.50px;top:601px;font-size:14px;color:#000;letter-spacing:0.076px;">15.870997</span>
<span class="t" style="left:373.50px;top:621px;font-size:14px;color:#000;letter-spacing:0.076px;">15.874330</span>
<span class="t" style="left:373.50px;top:641px;font-size:14px;color:#000;letter-spacing:0.076px;">19.123265</span>
<span class="t" style="left:373.50px;top:661px;font-size:14px;color:#000;letter-spacing:0.076px;">19.123489</span>
<span class="t" style="left:373.50px;top:681px;font-size:14px;color:#000;letter-spacing:0.076px;">32.269552</span>
<div style="left:523px;top:309px;width:300px;height:381px;background:#fff;"></div>
<div style="left:523px;top:309px;width:300px;height:1px;background:#9a9893;"></div>
<div style="left:523px;top:309px;width:1px;height:381px;background:#9a9893;"></div>
<div style="left:524px;top:310px;width:298px;height:1px;background:#ffffff;"></div>
<div style="left:524px;top:310px;width:1px;height:379px;background:#ffffff;"></div>
<div style="left:523px;top:689px;width:300px;height:1px;background:#ffffff;"></div>
<div style="left:822px;top:309px;width:1px;height:381px;background:#ffffff;"></div>
<div style="left:524px;top:688px;width:298px;height:1px;background:#9a9893;"></div>
<div style="left:821px;top:310px;width:1px;height:379px;background:#9a9893;"></div>
<div style="left:525px;top:311px;width:296px;height:40px;background:#eae5e0;"></div>
<div class="clip" style="left:525px;top:311px;width:296px;height:377px">
<span class="t" style="left:1.00px;top:11px;font-size:14px;color:#000;letter-spacing:0.120px;">139.196.104.95</span>
<span class="t" style="left:201.00px;top:11px;font-size:14px;color:#000;letter-spacing:0.120px;">107.150.191.94</span>
<span class="t" style="left:97.00px;top:28px;font-size:14px;color:#000;letter-spacing:0.169px;">139.196.105.110</span>
<div style="left:0px;top:40px;width:297px;height:340px;background:#90ee90;"></div>
<div style="left:49px;top:40px;width:2px;height:340px;background:repeating-linear-gradient(to bottom,rgba(96,96,96,.52) 0,rgba(96,96,96,.52) 5px,transparent 5px,transparent 9px)"></div>
<div style="left:149px;top:40px;width:2px;height:340px;background:repeating-linear-gradient(to bottom,rgba(96,96,96,.52) 0,rgba(96,96,96,.52) 5px,transparent 5px,transparent 9px)"></div>
<div style="left:249px;top:40px;width:2px;height:340px;background:repeating-linear-gradient(to bottom,rgba(96,96,96,.52) 0,rgba(96,96,96,.52) 5px,transparent 5px,transparent 9px)"></div>
<div style="left:50px;top:53px;width:100px;height:1px;background:#000000;"></div>
<span class="t" style="left:53.00px;top:47px;font-size:14px;color:#000;letter-spacing:-0.251px;">INVITE SDP (...</span>
<span class="t" style="left:16.50px;top:56px;font-size:10px;color:#5f705f;letter-spacing:0.432px;">(5060)</span>
<span class="t" style="left:152.50px;top:56px;font-size:10px;color:#5f705f;letter-spacing:0.432px;">(5060)</span>
<div style="left:50px;top:73px;width:100px;height:1px;background:#000000;"></div>
<span class="t" style="left:67.40px;top:67px;font-size:14px;color:#000;letter-spacing:-0.017px;">100 Trying</span>
<span class="t" style="left:16.50px;top:76px;font-size:10px;color:#5f705f;letter-spacing:0.432px;">(5060)</span>
<span class="t" style="left:152.50px;top:76px;font-size:10px;color:#5f705f;letter-spacing:0.432px;">(5060)</span>
<div style="left:50px;top:93px;width:100px;height:1px;background:#000000;"></div>
<span class="t" style="left:67.40px;top:87px;font-size:14px;color:#000;letter-spacing:-0.017px;">100 Trying</span>
<span class="t" style="left:16.50px;top:96px;font-size:10px;color:#5f705f;letter-spacing:0.432px;">(5060)</span>
<span class="t" style="left:152.50px;top:96px;font-size:10px;color:#5f705f;letter-spacing:0.432px;">(5060)</span>
<div style="left:50px;top:113px;width:100px;height:1px;background:#000000;"></div>
<span class="t" style="left:53.00px;top:107px;font-size:14px;color:#000;letter-spacing:0.092px;">183 Session ...</span>
<span class="t" style="left:16.50px;top:116px;font-size:10px;color:#5f705f;letter-spacing:0.432px;">(5060)</span>
<span class="t" style="left:152.50px;top:116px;font-size:10px;color:#5f705f;letter-spacing:0.432px;">(5060)</span>
<div style="left:50px;top:133px;width:100px;height:1px;background:#000000;"></div>
<span class="t" style="left:53.00px;top:127px;font-size:14px;color:#000;letter-spacing:0.092px;">183 Session ...</span>
<span class="t" style="left:16.50px;top:136px;font-size:10px;color:#5f705f;letter-spacing:0.432px;">(5060)</span>
<span class="t" style="left:152.50px;top:136px;font-size:10px;color:#5f705f;letter-spacing:0.432px;">(5060)</span>
<div style="left:50px;top:153px;width:100px;height:1px;background:#000000;"></div>
<span class="t" style="left:53.00px;top:147px;font-size:14px;color:#000;letter-spacing:0.092px;">183 Session ...</span>
<span class="t" style="left:16.50px;top:156px;font-size:10px;color:#5f705f;letter-spacing:0.432px;">(5060)</span>
<span class="t" style="left:152.50px;top:156px;font-size:10px;color:#5f705f;letter-spacing:0.432px;">(5060)</span>
<div style="left:50px;top:173px;width:100px;height:1px;background:#000000;"></div>
<span class="t" style="left:53.00px;top:167px;font-size:14px;color:#000;letter-spacing:0.092px;">183 Session ...</span>
<span class="t" style="left:16.50px;top:176px;font-size:10px;color:#5f705f;letter-spacing:0.432px;">(5060)</span>
<span class="t" style="left:152.50px;top:176px;font-size:10px;color:#5f705f;letter-spacing:0.432px;">(5060)</span>
<div style="left:50px;top:193px;width:100px;height:1px;background:#000000;"></div>
<span class="t" style="left:53.00px;top:187px;font-size:14px;color:#000;letter-spacing:0.092px;">183 Session ...</span>
<span class="t" style="left:16.50px;top:196px;font-size:10px;color:#5f705f;letter-spacing:0.432px;">(5060)</span>
<span class="t" style="left:152.50px;top:196px;font-size:10px;color:#5f705f;letter-spacing:0.432px;">(5060)</span>
<div style="left:50px;top:213px;width:100px;height:1px;background:#000000;"></div>
<span class="t" style="left:53.00px;top:207px;font-size:14px;color:#000;letter-spacing:0.248px;">180 Ringing ...</span>
<span class="t" style="left:16.50px;top:216px;font-size:10px;color:#5f705f;letter-spacing:0.432px;">(5060)</span>
<span class="t" style="left:152.50px;top:216px;font-size:10px;color:#5f705f;letter-spacing:0.432px;">(5060)</span>
<span class="t" style="left:114.05px;top:227px;font-size:14px;color:#000;letter-spacing:-0.356px;">RTP (g729)</span>
<span class="t" style="left:10.00px;top:236px;font-size:10px;color:#5f705f;letter-spacing:0.504px;">(15516)</span>
<span class="t" style="left:252.50px;top:236px;font-size:10px;color:#5f705f;letter-spacing:0.504px;">(13672)</span>
<div style="left:50px;top:253px;width:100px;height:1px;background:#000000;"></div>
<span class="t" style="left:53.00px;top:247px;font-size:14px;color:#000;letter-spacing:0.248px;">180 Ringing ...</span>
<span class="t" style="left:16.50px;top:256px;font-size:10px;color:#5f705f;letter-spacing:0.432px;">(5060)</span>
<span class="t" style="left:152.50px;top:256px;font-size:10px;color:#5f705f;letter-spacing:0.432px;">(5060)</span>
<span class="t" style="left:114.05px;top:267px;font-size:14px;color:#000;letter-spacing:-0.356px;">RTP (g729)</span>
<span class="t" style="left:10.00px;top:276px;font-size:10px;color:#5f705f;letter-spacing:0.504px;">(15516)</span>
<span class="t" style="left:252.50px;top:276px;font-size:10px;color:#5f705f;letter-spacing:0.504px;">(13672)</span>
<div style="left:50px;top:293px;width:100px;height:1px;background:#000000;"></div>
<span class="t" style="left:53.00px;top:287px;font-size:14px;color:#000;letter-spacing:0.248px;">180 Ringing ...</span>
<span class="t" style="left:16.50px;top:296px;font-size:10px;color:#5f705f;letter-spacing:0.432px;">(5060)</span>
<span class="t" style="left:152.50px;top:296px;font-size:10px;color:#5f705f;letter-spacing:0.432px;">(5060)</span>
<span class="t" style="left:114.05px;top:307px;font-size:14px;color:#000;letter-spacing:-0.356px;">RTP (g729)</span>
<span class="t" style="left:10.00px;top:316px;font-size:10px;color:#5f705f;letter-spacing:0.504px;">(15516)</span>
<span class="t" style="left:252.50px;top:316px;font-size:10px;color:#5f705f;letter-spacing:0.504px;">(13672)</span>
<div style="left:50px;top:333px;width:100px;height:1px;background:#000000;"></div>
<span class="t" style="left:51.50px;top:327px;font-size:14px;color:#000;letter-spacing:-0.208px;">200 OK SDP (...</span>
<span class="t" style="left:16.50px;top:336px;font-size:10px;color:#5f705f;letter-spacing:0.432px;">(5060)</span>
<span class="t" style="left:152.50px;top:336px;font-size:10px;color:#5f705f;letter-spacing:0.432px;">(5060)</span>
<div style="left:50px;top:353px;width:100px;height:1px;background:#000000;"></div>
<span class="t" style="left:86.50px;top:347px;font-size:14px;color:#000;letter-spacing:-0.596px;">ACK</span>
<span class="t" style="left:16.50px;top:356px;font-size:10px;color:#5f705f;letter-spacing:0.432px;">(5060)</span>
<span class="t" style="left:152.50px;top:356px;font-size:10px;color:#5f705f;letter-spacing:0.432px;">(5060)</span>
<div style="left:50px;top:373px;width:100px;height:1px;background:#000000;"></div>
<span class="t" style="left:87.50px;top:367px;font-size:14px;color:#000;letter-spacing:-1.005px;">BYE</span>
<span class="t" style="left:16.50px;top:376px;font-size:10px;color:#5f705f;letter-spacing:0.432px;">(5060)</span>
<span class="t" style="left:152.50px;top:376px;font-size:10px;color:#5f705f;letter-spacing:0.432px;">(5060)</span>
<svg style="left:0;top:0" width="297" height="377" viewBox="0 0 297 377"><g fill="#000"><path d="M150 53.5l-8 -3v6z"/><path d="M50 73.5l8 -3v6z"/><path d="M50 93.5l8 -3v6z"/><path d="M50 113.5l8 -3v6z"/><path d="M50 133.5l8 -3v6z"/><path d="M50 153.5l8 -3v6z"/><path d="M50 173.5l8 -3v6z"/><path d="M50 193.5l8 -3v6z"/><path d="M50 213.5l8 -3v6z"/><path d="M50 233.5H246" stroke="#000" stroke-width="2" fill="none"/><path d="M250 233.5l-8 -3v6z"/><path d="M50 253.5l8 -3v6z"/><path d="M50 273.5H246" stroke="#000" stroke-width="2" fill="none"/><path d="M250 273.5l-8 -3v6z"/><path d="M50 293.5l8 -3v6z"/><path d="M50 313.5H246" stroke="#000" stroke-width="2" fill="none"/><path d="M250 313.5l-8 -3v6z"/><path d="M50 333.5l8 -3v6z"/><path d="M150 353.5l-8 -3v6z"/><path d="M150 373.5l-8 -3v6z"/></g></svg>
</div>
<div style="left:523px;top:693px;width:300px;height:16px;background:#c4c2bd;"></div>
<div style="left:523px;top:693px;width:300px;height:1px;background:#9a9893;"></div>
<div style="left:523px;top:693px;width:1px;height:16px;background:#9a9893;"></div>
<div style="left:523px;top:708px;width:300px;height:1px;background:#ffffff;"></div>
<div style="left:822px;top:693px;width:1px;height:16px;background:#ffffff;"></div>
<div style="left:524px;top:694px;width:14px;height:14px;background:#dcdad5;"></div>
<div style="left:524px;top:694px;width:13px;height:1px;background:#ffffff;"></div>
<div style="left:524px;top:694px;width:1px;height:13px;background:#ffffff;"></div>
<div style="left:524px;top:707px;width:14px;height:1px;background:#000000;"></div>
<div style="left:537px;top:694px;width:1px;height:14px;background:#000000;"></div>
<div style="left:525px;top:706px;width:12px;height:1px;background:#9a9893;"></div>
<div style="left:536px;top:695px;width:1px;height:12px;background:#9a9893;"></div>
<svg style="left:528px;top:697px" width="4" height="7" viewBox="0 0 4 7"><path d="M4 0v7L0 3.5z" fill="#8a8883"/></svg>
<div style="left:808px;top:694px;width:14px;height:14px;background:#dcdad5;"></div>
<div style="left:808px;top:694px;width:13px;height:1px;background:#ffffff;"></div>
<div style="left:808px;top:694px;width:1px;height:13px;background:#ffffff;"></div>
<div style="left:808px;top:707px;width:14px;height:1px;background:#000000;"></div>
<div style="left:821px;top:694px;width:1px;height:14px;background:#000000;"></div>
<div style="left:809px;top:706px;width:12px;height:1px;background:#9a9893;"></div>
<div style="left:820px;top:695px;width:1px;height:12px;background:#9a9893;"></div>
<svg style="left:813px;top:697px" width="4" height="7" viewBox="0 0 4 7"><path d="M0 0v7L4 3.5z" fill="#000"/></svg>
<div style="left:538px;top:694px;width:159px;height:14px;background:#dcdad5;"></div>
<div style="left:538px;top:694px;width:158px;height:1px;background:#ffffff;"></div>
<div style="left:538px;top:694px;width:1px;height:13px;background:#ffffff;"></div>
<div style="left:538px;top:707px;width:159px;height:1px;background:#000000;"></div>
<div style="left:696px;top:694px;width:1px;height:14px;background:#000000;"></div>
<div style="left:539px;top:706px;width:157px;height:1px;background:#9a9893;"></div>
<div style="left:695px;top:695px;width:1px;height:12px;background:#9a9893;"></div>
<div style="left:828px;top:309px;width:266px;height:381px;background:#fff;"></div>
<div style="left:828px;top:309px;width:266px;height:1px;background:#9a9893;"></div>
<div style="left:828px;top:309px;width:1px;height:381px;background:#9a9893;"></div>
<div style="left:829px;top:310px;width:264px;height:1px;background:#ffffff;"></div>
<div style="left:829px;top:310px;width:1px;height:379px;background:#ffffff;"></div>
<div style="left:828px;top:689px;width:266px;height:1px;background:#ffffff;"></div>
<div style="left:1093px;top:309px;width:1px;height:381px;background:#ffffff;"></div>
<div style="left:829px;top:688px;width:264px;height:1px;background:#9a9893;"></div>
<div style="left:1092px;top:310px;width:1px;height:379px;background:#9a9893;"></div>
<div style="left:830px;top:311px;width:262px;height:40px;background:#eae5e0;"></div>
<span class="t" style="left:848.00px;top:331px;font-size:14px;color:#000;letter-spacing:0.474px;">Comment</span>
<div class="clip" style="left:830px;top:351px;width:262px;height:337px">
<span class="t" style="left:1.80px;top:10px;font-size:11.5px;color:#000;letter-spacing:-0.019px;">SIP INVITE From: "8108" </span>
<span class="t" style="left:133.90px;top:10px;font-size:11.5px;color:#000;letter-spacing:0.394px;">&lt;sip:33199364</span>
<span class="t" style="left:216.30px;top:10px;font-size:11.5px;color:#000;">@</span>
<span class="t" style="left:229.60px;top:10px;font-size:11.5px;color:#000;letter-spacing:0.401px;">139.196.104.95</span>
<span class="t" style="left:1.80px;top:30px;font-size:11.5px;color:#000;letter-spacing:0.032px;">SIP Status 100 Trying</span>
<span class="t" style="left:1.80px;top:50px;font-size:11.5px;color:#000;letter-spacing:0.032px;">SIP Status 100 Trying</span>
<span class="t" style="left:1.80px;top:70px;font-size:11.5px;color:#000;letter-spacing:0.102px;">SIP Status 183 Session Progress</span>
<span class="t" style="left:1.80px;top:90px;font-size:11.5px;color:#000;letter-spacing:0.102px;">SIP Status 183 Session Progress</span>
<span class="t" style="left:1.80px;top:110px;font-size:11.5px;color:#000;letter-spacing:0.102px;">SIP Status 183 Session Progress</span>
<span class="t" style="left:1.80px;top:130px;font-size:11.5px;color:#000;letter-spacing:0.102px;">SIP Status 183 Session Progress</span>
<span class="t" style="left:1.80px;top:150px;font-size:11.5px;color:#000;letter-spacing:0.102px;">SIP Status 183 Session Progress</span>
<span class="t" style="left:1.80px;top:170px;font-size:11.5px;color:#000;letter-spacing:0.095px;">SIP Status 180 Ringing</span>
<span class="t" style="left:1.80px;top:190px;font-size:11.5px;color:#000;letter-spacing:0.142px;">RTP, 89 packets. Duration: 4294955.322s SSRC: 0x1</span>
<span class="t" style="left:1.80px;top:210px;font-size:11.5px;color:#000;letter-spacing:0.095px;">SIP Status 180 Ringing</span>
<span class="t" style="left:1.80px;top:230px;font-size:11.5px;color:#000;letter-spacing:0.161px;">RTP, 106 packets. Duration: 4294953.543s SSRC: 0x1</span>
<span class="t" style="left:1.80px;top:250px;font-size:11.5px;color:#000;letter-spacing:0.095px;">SIP Status 180 Ringing</span>
<span class="t" style="left:1.80px;top:270px;font-size:11.5px;color:#000;letter-spacing:0.161px;">RTP, 810 packets. Duration: 4294951.422s SSRC: 0x1</span>
<span class="t" style="left:1.80px;top:290px;font-size:11.5px;color:#000;letter-spacing:-0.066px;">SIP Status 200 OK</span>
<span class="t" style="left:1.80px;top:310px;font-size:11.5px;color:#000;letter-spacing:-0.084px;">SIP Request INVITE ACK 200 CSeq:102</span>
<span class="t" style="left:1.80px;top:330px;font-size:11.5px;color:#000;letter-spacing:-0.138px;">SIP Request BYE CSeq:103</span>
</div>
<div style="left:828px;top:693px;width:266px;height:16px;background:#c4c2bd;"></div>
<div style="left:828px;top:693px;width:266px;height:1px;background:#9a9893;"></div>
<div style="left:828px;top:693px;width:1px;height:16px;background:#9a9893;"></div>
<div style="left:828px;top:708px;width:266px;height:1px;background:#ffffff;"></div>
<div style="left:1093px;top:693px;width:1px;height:16px;background:#ffffff;"></div>
<div style="left:829px;top:694px;width:14px;height:14px;background:#dcdad5;"></div>
<div style="left:829px;top:694px;width:13px;height:1px;background:#ffffff;"></div>
<div style="left:829px;top:694px;width:1px;height:13px;background:#ffffff;"></div>
<div style="left:829px;top:707px;width:14px;height:1px;background:#000000;"></div>
<div style="left:842px;top:694px;width:1px;height:14px;background:#000000;"></div>
<div style="left:830px;top:706px;width:12px;height:1px;background:#9a9893;"></div>
<div style="left:841px;top:695px;width:1px;height:12px;background:#9a9893;"></div>
<svg style="left:833px;top:697px" width="4" height="7" viewBox="0 0 4 7"><path d="M4 0v7L0 3.5z" fill="#8a8883"/></svg>
<div style="left:1079px;top:694px;width:14px;height:14px;background:#dcdad5;"></div>
<div style="left:1079px;top:694px;width:13px;height:1px;background:#ffffff;"></div>
<div style="left:1079px;top:694px;width:1px;height:13px;background:#ffffff;"></div>
<div style="left:1079px;top:707px;width:14px;height:1px;background:#000000;"></div>
<div style="left:1092px;top:694px;width:1px;height:14px;background:#000000;"></div>
<div style="left:1080px;top:706px;width:12px;height:1px;background:#9a9893;"></div>
<div style="left:1091px;top:695px;width:1px;height:12px;background:#9a9893;"></div>
<svg style="left:1084px;top:697px" width="4" height="7" viewBox="0 0 4 7"><path d="M0 0v7L4 3.5z" fill="#000"/></svg>
<div style="left:843px;top:694px;width:154px;height:14px;background:#dcdad5;"></div>
<div style="left:843px;top:694px;width:153px;height:1px;background:#ffffff;"></div>
<div style="left:843px;top:694px;width:1px;height:13px;background:#ffffff;"></div>
<div style="left:843px;top:707px;width:154px;height:1px;background:#000000;"></div>
<div style="left:996px;top:694px;width:1px;height:14px;background:#000000;"></div>
<div style="left:844px;top:706px;width:152px;height:1px;background:#9a9893;"></div>
<div style="left:995px;top:695px;width:1px;height:12px;background:#9a9893;"></div>
<div style="left:519px;top:494px;width:2px;height:1px;background:#fff;"></div>
<div style="left:519px;top:495px;width:1px;height:1px;background:#fff;"></div>
<div style="left:520px;top:495px;width:1px;height:1px;background:#555;"></div>
<div style="left:521px;top:495px;width:1px;height:1px;background:#000;"></div>
<div style="left:520px;top:496px;width:2px;height:1px;background:#000;"></div>
<div style="left:824px;top:494px;width:2px;height:1px;background:#fff;"></div>
<div style="left:824px;top:495px;width:1px;height:1px;background:#fff;"></div>
<div style="left:825px;top:495px;width:1px;height:1px;background:#555;"></div>
<div style="left:826px;top:495px;width:1px;height:1px;background:#000;"></div>
<div style="left:825px;top:496px;width:2px;height:1px;background:#000;"></div>
<div style="left:519px;top:499px;width:2px;height:1px;background:#fff;"></div>
<div style="left:519px;top:500px;width:1px;height:1px;background:#fff;"></div>
<div style="left:520px;top:500px;width:1px;height:1px;background:#555;"></div>
<div style="left:521px;top:500px;width:1px;height:1px;background:#000;"></div>
<div style="left:520px;top:501px;width:2px;height:1px;background:#000;"></div>
<div style="left:824px;top:499px;width:2px;height:1px;background:#fff;"></div>
<div style="left:824px;top:500px;width:1px;height:1px;background:#fff;"></div>
<div style="left:825px;top:500px;width:1px;height:1px;background:#555;"></div>
<div style="left:826px;top:500px;width:1px;height:1px;background:#000;"></div>
<div style="left:825px;top:501px;width:2px;height:1px;background:#000;"></div>
<div style="left:519px;top:504px;width:2px;height:1px;background:#fff;"></div>
<div style="left:519px;top:505px;width:1px;height:1px;background:#fff;"></div>
<div style="left:520px;top:505px;width:1px;height:1px;background:#555;"></div>
<div style="left:521px;top:505px;width:1px;height:1px;background:#000;"></div>
<div style="left:520px;top:506px;width:2px;height:1px;background:#000;"></div>
<div style="left:824px;top:504px;width:2px;height:1px;background:#fff;"></div>
<div style="left:824px;top:505px;width:1px;height:1px;background:#fff;"></div>
<div style="left:825px;top:505px;width:1px;height:1px;background:#555;"></div>
<div style="left:826px;top:505px;width:1px;height:1px;background:#000;"></div>
<div style="left:825px;top:506px;width:2px;height:1px;background:#000;"></div>
<div style="left:519px;top:509px;width:2px;height:1px;background:#fff;"></div>
<div style="left:519px;top:510px;width:1px;height:1px;background:#fff;"></div>
<div style="left:520px;top:510px;width:1px;height:1px;background:#555;"></div>
<div style="left:521px;top:510px;width:1px;height:1px;background:#000;"></div>
<div style="left:520px;top:511px;width:2px;height:1px;background:#000;"></div>
<div style="left:824px;top:509px;width:2px;height:1px;background:#fff;"></div>
<div style="left:824px;top:510px;width:1px;height:1px;background:#fff;"></div>
<div style="left:825px;top:510px;width:1px;height:1px;background:#555;"></div>
<div style="left:826px;top:510px;width:1px;height:1px;background:#000;"></div>
<div style="left:825px;top:511px;width:2px;height:1px;background:#000;"></div>
<div style="left:519px;top:514px;width:2px;height:1px;background:#fff;"></div>
<div style="left:519px;top:515px;width:1px;height:1px;background:#fff;"></div>
<div style="left:520px;top:515px;width:1px;height:1px;background:#555;"></div>
<div style="left:521px;top:515px;width:1px;height:1px;background:#000;"></div>
<div style="left:520px;top:516px;width:2px;height:1px;background:#000;"></div>
<div style="left:824px;top:514px;width:2px;height:1px;background:#fff;"></div>
<div style="left:824px;top:515px;width:1px;height:1px;background:#fff;"></div>
<div style="left:825px;top:515px;width:1px;height:1px;background:#555;"></div>
<div style="left:826px;top:515px;width:1px;height:1px;background:#000;"></div>
<div style="left:825px;top:516px;width:2px;height:1px;background:#000;"></div>
<div style="left:519px;top:519px;width:2px;height:1px;background:#fff;"></div>
<div style="left:519px;top:520px;width:1px;height:1px;background:#fff;"></div>
<div style="left:520px;top:520px;width:1px;height:1px;background:#555;"></div>
<div style="left:521px;top:520px;width:1px;height:1px;background:#000;"></div>
<div style="left:520px;top:521px;width:2px;height:1px;background:#000;"></div>
<div style="left:824px;top:519px;width:2px;height:1px;background:#fff;"></div>
<div style="left:824px;top:520px;width:1px;height:1px;background:#fff;"></div>
<div style="left:825px;top:520px;width:1px;height:1px;background:#555;"></div>
<div style="left:826px;top:520px;width:1px;height:1px;background:#000;"></div>
<div style="left:825px;top:521px;width:2px;height:1px;background:#000;"></div>
<div style="left:519px;top:524px;width:2px;height:1px;background:#fff;"></div>
<div style="left:519px;top:525px;width:1px;height:1px;background:#fff;"></div>
<div style="left:520px;top:525px;width:1px;height:1px;background:#555;"></div>
<div style="left:521px;top:525px;width:1px;height:1px;background:#000;"></div>
<div style="left:520px;top:526px;width:2px;height:1px;background:#000;"></div>
<div style="left:824px;top:524px;width:2px;height:1px;background:#fff;"></div>
<div style="left:824px;top:525px;width:1px;height:1px;background:#fff;"></div>
<div style="left:825px;top:525px;width:1px;height:1px;background:#555;"></div>
<div style="left:826px;top:525px;width:1px;height:1px;background:#000;"></div>
<div style="left:825px;top:526px;width:2px;height:1px;background:#000;"></div>
<div style="left:1097px;top:309px;width:16px;height:382px;background:#c4c2bd;"></div>
<div style="left:1097px;top:309px;width:16px;height:1px;background:#9a9893;"></div>
<div style="left:1097px;top:309px;width:1px;height:382px;background:#9a9893;"></div>
<div style="left:1097px;top:690px;width:16px;height:1px;background:#ffffff;"></div>
<div style="left:1112px;top:309px;width:1px;height:382px;background:#ffffff;"></div>
<div style="left:1098px;top:310px;width:14px;height:14px;background:#dcdad5;"></div>
<div style="left:1098px;top:310px;width:13px;height:1px;background:#ffffff;"></div>
<div style="left:1098px;top:310px;width:1px;height:13px;background:#ffffff;"></div>
<div style="left:1098px;top:323px;width:14px;height:1px;background:#000000;"></div>
<div style="left:1111px;top:310px;width:1px;height:14px;background:#000000;"></div>
<div style="left:1099px;top:322px;width:12px;height:1px;background:#9a9893;"></div>
<div style="left:1110px;top:311px;width:1px;height:12px;background:#9a9893;"></div>
<svg style="left:1101.5px;top:314.5px" width="7" height="4" viewBox="0 0 7 4"><path d="M0 4h7L3.5 0z" fill="#8a8883"/></svg>
<div style="left:1098px;top:324px;width:14px;height:331px;background:#dcdad5;"></div>
<div style="left:1098px;top:324px;width:13px;height:1px;background:#ffffff;"></div>
<div style="left:1098px;top:324px;width:1px;height:330px;background:#ffffff;"></div>
<div style="left:1098px;top:654px;width:14px;height:1px;background:#000000;"></div>
<div style="left:1111px;top:324px;width:1px;height:331px;background:#000000;"></div>
<div style="left:1099px;top:653px;width:12px;height:1px;background:#9a9893;"></div>
<div style="left:1110px;top:325px;width:1px;height:329px;background:#9a9893;"></div>
<div style="left:1098px;top:676px;width:14px;height:14px;background:#dcdad5;"></div>
<div style="left:1098px;top:676px;width:13px;height:1px;background:#ffffff;"></div>
<div style="left:1098px;top:676px;width:1px;height:13px;background:#ffffff;"></div>
<div style="left:1098px;top:689px;width:14px;height:1px;background:#000000;"></div>
<div style="left:1111px;top:676px;width:1px;height:14px;background:#000000;"></div>
<div style="left:1099px;top:688px;width:12px;height:1px;background:#9a9893;"></div>
<div style="left:1110px;top:677px;width:1px;height:12px;background:#9a9893;"></div>
<svg style="left:1101.5px;top:681px" width="7" height="4" viewBox="0 0 7 4"><path d="M0 0h7L3.5 4z" fill="#000"/></svg>
<div style="left:554px;top:724px;width:92px;height:32px;background:#dcdad5;"></div>
<div style="left:554px;top:724px;width:91px;height:1px;background:#ffffff;"></div>
<div style="left:554px;top:724px;width:1px;height:31px;background:#ffffff;"></div>
<div style="left:554px;top:755px;width:92px;height:1px;background:#000000;"></div>
<div style="left:645px;top:724px;width:1px;height:32px;background:#000000;"></div>
<div style="left:555px;top:754px;width:90px;height:1px;background:#9a9893;"></div>
<div style="left:644px;top:725px;width:1px;height:30px;background:#9a9893;"></div>
<span class="t" style="left:585.00px;top:739px;font-size:14px;color:#000;letter-spacing:0.090px;">Save <u>A</u>s</span>
<svg style="left:564px;top:730px" width="19" height="19" viewBox="0 0 20 20"><defs><linearGradient id="gsv" x1="0" y1="0" x2="0" y2="1"><stop offset="0" stop-color="#7aa2d8"/><stop offset="1" stop-color="#3c6cb4"/></linearGradient></defs><rect x="0.5" y="1.5" width="18" height="18" rx="1.5" fill="url(#gsv)" stroke="#2a4f8c"/><rect x="2.5" y="2" width="13.5" height="9" fill="#fafafa"/><rect x="2.5" y="2" width="13.5" height="2" fill="#e02020"/><rect x="4" y="6" width="8" height="1" fill="#b0b0b0"/><rect x="4" y="8" width="8" height="1" fill="#b0b0b0"/><rect x="4.5" y="13.5" width="10" height="5.5" fill="#d8dce4" stroke="#8a94a8" stroke-width="0.8"/><rect x="6" y="14.5" width="2.6" height="3.6" fill="#3a5a90"/><path d="M10.5 9.5 L17.5 1.2 L19.3 2.8 L12.4 11 L10 11.8Z" fill="#f0a030" stroke="#a86010" stroke-width="0.7" stroke-linejoin="round"/><path d="M17.5 1.2 L19.3 2.8 L18.3 4 L16.6 2.4Z" fill="#e06080"/></svg>
<div style="left:837px;top:724px;width:92px;height:32px;background:#000000;"></div>
<div style="left:838px;top:725px;width:90px;height:30px;background:#dcdad5;"></div>
<div style="left:838px;top:725px;width:89px;height:1px;background:#ffffff;"></div>
<div style="left:838px;top:725px;width:1px;height:29px;background:#ffffff;"></div>
<div style="left:838px;top:754px;width:90px;height:1px;background:#000000;"></div>
<div style="left:927px;top:725px;width:1px;height:30px;background:#000000;"></div>
<div style="left:839px;top:753px;width:88px;height:1px;background:#9a9893;"></div>
<div style="left:926px;top:726px;width:1px;height:28px;background:#9a9893;"></div>
<span class="t" style="left:876.00px;top:739px;font-size:14px;color:#000;letter-spacing:0.041px;"><u>C</u>lose</span>
<svg style="left:854px;top:731px" width="20" height="20" viewBox="0 0 20 20"><ellipse cx="10" cy="18.3" rx="6" ry="1.2" fill="#b8b6b0"/><path d="M3.5 3.5 L16.3 15.3 M16.3 3.5 L3.5 15.3" stroke="#4a4c48" stroke-width="5.4" stroke-linecap="round" fill="none"/><path d="M3.5 3.5 L16.3 15.3 M16.3 3.5 L3.5 15.3" stroke="#8e908a" stroke-width="3.2" stroke-linecap="round" fill="none"/></svg>
</div></body></html>
